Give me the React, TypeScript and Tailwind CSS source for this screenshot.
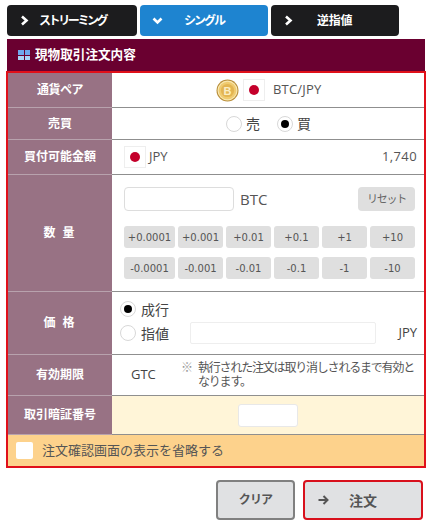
import React from 'react';

const jpFont = "font-['Open_Sans','Noto_Sans_CJK_JP',sans-serif]";

const Chevron: React.FC<{ down?: boolean }> = ({ down }) => (
  <svg width="11" height="11" viewBox="0 0 11 11" className="shrink-0">
    <path
      d={down ? 'M1.5 3.5 L5.5 7.5 L9.5 3.5' : 'M3 1.5 L7.5 5.5 L3 9.5'}
      fill="none"
      stroke="#fff"
      strokeWidth="2.6"
    />
  </svg>
);

const Tab: React.FC<{ label: string; active?: boolean; width: string; labelClass: string }> = ({ label, active, width, labelClass }) => (
  <div
    className={`${width} h-[31px] rounded-[4px] flex items-center pl-[12px] text-white text-[12px] font-bold ${
      active ? 'bg-[#1e84d0]' : 'bg-[#1c1c1e]'
    }`}
  >
    <Chevron down={active} />
    <span className={`whitespace-nowrap ${labelClass}`}>{label}</span>
  </div>
);

const Flag = () => (
  <span className="w-[22px] h-[22px] bg-white border border-[#eeeeee] flex items-center justify-center shrink-0">
    <span className="w-[10px] h-[10px] rounded-full bg-[#c4002b]" />
  </span>
);

const Radio: React.FC<{ checked?: boolean }> = ({ checked }) => (
  <span className="w-[16px] h-[16px] rounded-full bg-white border border-[#d8d8d8] flex items-center justify-center shrink-0">
    {checked && <span className="w-[8px] h-[8px] rounded-full bg-black" />}
  </span>
);

const Coin = () => (
  <svg width="23" height="23" viewBox="0 0 23 23" className="shrink-0">
    <circle cx="11.5" cy="11.5" r="11" fill="#b98f3c" />
    <circle cx="11.5" cy="11.5" r="9.4" fill="#f0cb70" stroke="#f9e7ad" strokeWidth="1.2" />
    <circle cx="11.5" cy="11.5" r="6.6" fill="#e3b552" />
    <text x="11.5" y="15.6" textAnchor="middle" fontSize="11" fontWeight="700" fill="#fbeec4" fontFamily="Liberation Sans">B</text>
  </svg>
);

const Row: React.FC<{ label: string; height: string; children: React.ReactNode; className?: string; labelClass?: string }> = ({
  label,
  height,
  children,
  className = 'bg-white',
  labelClass = '',
}) => (
  <div className={`flex ${height} border-b border-[#8f8f8f]`}>
    <div className={`w-[104px] shrink-0 bg-[#987284] border-b border-[#b8a2ad] -mb-px flex items-center justify-center text-white text-[12px] font-bold whitespace-pre ${labelClass}`}>
      {label}
    </div>
    <div className={`flex-1 min-w-0 ${className}`}>{children}</div>
  </div>
);

const Step: React.FC<{ label: string; width: string }> = ({ label, width }) => (
  <div className={`${width} h-[22px] rounded-[3px] bg-[#dfdfdf] flex items-center justify-center text-[10px] text-[#555555] font-['DejaVu_Sans',sans-serif] whitespace-nowrap`}>
    {label}
  </div>
);

const widths = ['w-[51px]', 'w-[45px]', 'w-[45px]', 'w-[45px]', 'w-[45px]', 'w-[45px]'];
const plus = ['+0.0001', '+0.001', '+0.01', '+0.1', '+1', '+10'];
const minus = ['-0.0001', '-0.001', '-0.01', '-0.1', '-1', '-10'];

const App: React.FC = () => {
  return (
    <div className={`w-[433px] h-[524px] bg-white overflow-hidden pt-[5px] pl-[7px] text-[#444444] ${jpFont}`}>
      <div className="flex gap-[3px]">
        <Tab label="ストリーミング" width="w-[130px]" labelClass="ml-[9px] tracking-[-2.4px]" />
        <Tab label="シングル" width="w-[128px]" active labelClass="ml-[21px] tracking-[-2px]" />
        <Tab label="逆指値" width="w-[128px]" labelClass="ml-[23px] tracking-[-0.3px]" />
      </div>

      <div className="mt-[3px] w-[418px] h-[32px] bg-[#6a0030] flex items-center pl-[11px] gap-[5px] text-white text-[12.6px] font-bold">
        <span className="grid grid-cols-2 gap-px w-[12px] h-[10px]">
          <span className="bg-[#6fa8ee]" />
          <span className="bg-[#6fa8ee]" />
          <span className="bg-[#a8d4f8]" />
          <span className="bg-[#a8d4f8]" />
        </span>
        現物取引注文内容
      </div>

      <div className="-ml-px w-[420px] border-2 border-[#e0101a]">
        <Row label="通貨ペア" height="h-[35px]" labelClass="tracking-[-0.5px]">
          <div className="h-full flex items-center pl-[104px] text-[13px] tracking-[0.2px]">
            <Coin />
            <span className="ml-[4px]"><Flag /></span>
            <span className="ml-[8px] text-[#555555]">BTC/JPY</span>
          </div>
        </Row>
        <Row label="売買" height="h-[32px]">
          <div className="h-full flex items-center pl-[114px] text-[14px]">
            <Radio />
            <span className="ml-[4px]">売</span>
            <span className="ml-[17px]"><Radio checked /></span>
            <span className="ml-[4px]">買</span>
          </div>
        </Row>
        <Row label="買付可能金額" height="h-[35px]">
          <div className="h-full flex items-center pl-[12px] pr-[7px] text-[13px] text-[#555555]">
            <Flag />
            <span className="ml-[3px]">JPY</span>
            <span className="ml-auto tracking-[0.4px]">1,740</span>
          </div>
        </Row>
        <Row label="数 量" height="h-[117px]" labelClass="tracking-[2px]">
          <div className="pl-[12px] pr-[9px] pt-[12px]">
            <div className="flex items-center">
              <div className="w-[110px] h-[24px] bg-white border border-[#dddddd] rounded-[4px]" />
              <span className="ml-[6px] text-[15px] text-[#555555]">BTC</span>
              <div className="ml-auto w-[57px] h-[24px] rounded-[4px] bg-[#dfdfdf] flex items-center justify-center text-[11px] tracking-[-1.2px] text-[#666666]">
                リセット
              </div>
            </div>
            <div className="mt-[15px] flex gap-[3px]">
              {plus.map((p, i) => (
                <Step key={p} label={p} width={widths[i]} />
              ))}
            </div>
            <div className="mt-[9px] flex gap-[3px]">
              {minus.map((p, i) => (
                <Step key={p} label={p} width={widths[i]} />
              ))}
            </div>
          </div>
        </Row>
        <Row label="価 格" height="h-[63px]" labelClass="tracking-[2px]">
          <div className="pl-[8px] pr-[7px] pt-[7px] text-[14px]">
            <div className="flex items-center h-[20px]">
              <Radio checked />
              <span className="ml-[5px]">成行</span>
            </div>
            <div className="mt-[3px] flex items-center h-[22px]">
              <Radio />
              <span className="ml-[5px]">指値</span>
              <div className="ml-[21px] w-[186px] h-[22px] border border-[#eeeeee] rounded-[2px]" />
              <span className="ml-auto text-[13px]">JPY</span>
            </div>
          </div>
        </Row>
        <Row label="有効期限" height="h-[41px]">
          <div className="h-full flex items-center pl-[19px] pr-[4px] text-[13px]">
            <span className="w-[46px] shrink-0">GTC</span>
            <span className="text-[#999999] ml-[4px] w-[17px] shrink-0 self-start mt-[4px] text-[12px]">※</span>
            <span className="leading-[14px] text-[12px] tracking-[-1.2px] text-[#555555]">執行された注文は取り消しされるまで有効となります。</span>
          </div>
        </Row>
        <Row label="取引暗証番号" height="h-[39px]" className="bg-[#fff5d8]">
          <div className="h-full flex items-center pl-[126px]">
            <div className="w-[60px] h-[23px] bg-white border border-[#e8e8e8] rounded-[3px]" />
          </div>
        </Row>
        <div className="h-[31px] bg-[#fdd28c] flex items-center pl-[8px] text-[13px] text-[#555555]">
          <span className="w-[17px] h-[17px] bg-white rounded-[2px]" />
          <span className="ml-[9px]">注文確認画面の表示を省略する</span>
        </div>
      </div>

      <div className="mt-[12px] flex justify-end gap-[8px] w-[416px]">
        <div className="w-[79px] h-[40px] bg-[#e0e1e3] border-2 border-[#808080] rounded-[4px] flex items-center justify-center text-[12px] font-bold tracking-[-0.8px] text-[#555555]">
          クリア
        </div>
        <div className="w-[120px] h-[40px] bg-[#e0e1e3] border-2 border-[#d8101c] rounded-[4px] flex items-center pl-[13px] text-[14px] font-bold text-[#555555]">
          <svg width="11" height="10" viewBox="0 0 11 10">
            <path d="M0.5 5 H9 M5.5 1 L9.5 5 L5.5 9" fill="none" stroke="#555555" strokeWidth="2" />
          </svg>
          <span className="ml-[20px]">注文</span>
        </div>
      </div>
    </div>
  );
};

export default App;
